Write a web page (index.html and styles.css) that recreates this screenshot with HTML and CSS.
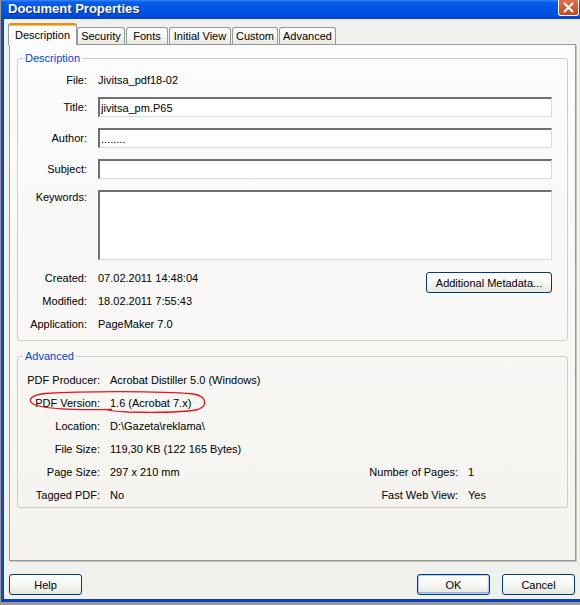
FILE: index.html
```html
<!DOCTYPE html>
<html lang="en">
<head>
    <meta charset="UTF-8">
    <title>Document Properties</title>
    <link rel="stylesheet" href="styles.css">
</head>
<body>
    <div class="window">
        <div class="titlebar">
            <span class="title">Document Properties</span>
            <span class="close">
                <svg width="13" height="11" viewBox="0 0 13 11"><path d="M2 1 L11 10 M11 1 L2 10" stroke="#fff" stroke-width="2.2" fill="none"/></svg>
            </span>
        </div>
        <div class="client">
            <div class="tabs">
                <div class="tab active">Description</div>
                <div class="tab t-security">Security</div>
                <div class="tab t-fonts">Fonts</div>
                <div class="tab t-view">Initial View</div>
                <div class="tab t-custom">Custom</div>
                <div class="tab t-adv">Advanced</div>
            </div>
            <div class="panel">
                <fieldset class="group">
                    <legend>Description</legend>
                    <div class="row row-file">
                        <span class="lbl">File:</span>
                        <span>Jivitsa_pdf18-02</span>
                    </div>
                    <div class="row">
                        <span class="lbl">Title:</span>
                        <input class="field" type="text" value="jivitsa_pm.P65">
                    </div>
                    <div class="row">
                        <span class="lbl">Author:</span>
                        <input class="field" type="text" value="........">
                    </div>
                    <div class="row">
                        <span class="lbl">Subject:</span>
                        <input class="field" type="text" value="">
                    </div>
                    <div class="row row-top">
                        <span class="lbl">Keywords:</span>
                        <textarea class="field area"></textarea>
                    </div>
                    <div class="meta">
                        <div class="meta-rows">
                            <span class="lbl">Created:</span><span>07.02.2011 14:48:04</span>
                            <span class="lbl">Modified:</span><span>18.02.2011 7:55:43</span>
                            <span class="lbl">Application:</span><span>PageMaker 7.0</span>
                        </div>
                        <button class="btn meta-btn">Additional Metadata...</button>
                    </div>
                </fieldset>

                <fieldset class="group adv">
                    <legend>Advanced</legend>
                    <div class="adv-grid">
                        <span class="lbl">PDF Producer:</span><span>Acrobat Distiller 5.0 (Windows)</span><span></span><span></span>
                        <span class="lbl">PDF Version:</span><span>1.6 (Acrobat 7.x)</span><span></span><span></span>
                        <span class="lbl">Location:</span><span>D:\Gazeta\reklama\</span><span></span><span></span>
                        <span class="lbl">File Size:</span><span>119,30 KB (122 165 Bytes)</span><span></span><span></span>
                        <span class="lbl">Page Size:</span><span>297 x 210 mm</span><span class="lbl">Number of Pages:</span><span>1</span>
                        <span class="lbl">Tagged PDF:</span><span>No</span><span class="lbl">Fast Web View:</span><span>Yes</span>
                    </div>
                </fieldset>
            </div>
            <div class="buttons">
                <button class="btn">Help</button>
                <div class="buttons-right">
                    <button class="btn default">OK</button>
                    <button class="btn">Cancel</button>
                </div>
            </div>
        </div>
    </div>

    <!-- red pen mark round the PDF version -->
    <svg class="pen" width="580" height="605" viewBox="0 0 580 605">
        <path d="M112 409.5 C85 410 45 410 33 404 C27 400 31 395 45 393.5 C85 391 160 391 193 394 C207 396 208 406 198 409.5 C182 413 150 412.5 128 412 C118 411.5 110 411 106 409.5" fill="none" stroke="#e8141c" stroke-width="1.3"/>
    </svg>
</body>
</html>
```

FILE: styles.css
```css
html, body {
    margin: 0;
}
body {
    position: relative;
    width: 580px;
    height: 605px;
    overflow: hidden;
    background: #9a9a9a;
    font-family: "Liberation Sans", Arial, sans-serif;
    font-size: 11px;
    color: #000;
}
.window {
    width: 579px;
    margin-left: 1px;
    border-left: 3px solid #0b47d6;
    border-bottom: 3px solid #0a3fc6;
}
.titlebar {
    display: flex;
    align-items: flex-start;
    height: 19px;
    margin-left: -3px;
    padding-left: 7px;
    background: linear-gradient(to bottom, #3d86f5 0, #0a5ee9 2px, #0057e6 40%, #0050de 75%, #0045cc 100%);
}
.title {
    color: #fff;
    font-weight: bold;
    font-size: 13px;
    line-height: 17px;
    text-shadow: 1px 1px 0 #0a2a8a;
}
.close {
    display: flex;
    justify-content: center;
    align-items: center;
    width: 19px;
    height: 15px;
    margin-left: auto;
    margin-right: 4px;
    border: 1px solid #fff;
    border-top: 0;
    border-radius: 0 0 3px 3px;
    background: linear-gradient(to bottom, #e4714a, #d9532c 60%, #c9431f);
}
.client {
    height: 580px;
    box-sizing: border-box;
    padding: 4px 0 0 4px;
    background: #f0f0ed;
}
.tabs {
    position: relative;
    z-index: 1;
    display: flex;
    align-items: flex-end;
    height: 22px;
    margin-bottom: -1px;
}
.tab {
    display: flex;
    justify-content: center;
    align-items: center;
    box-sizing: border-box;
    height: 17px;
    margin-right: 1px;
    margin-bottom: 1px;
    border: 1px solid #919b9c;
    border-bottom: 0;
    border-radius: 3px 3px 0 0;
    background: linear-gradient(to bottom, #fefefe, #f4f4f1 60%, #e9e8e1);
}
.tab.active {
    width: 69px;
    height: 22px;
    margin-right: 0;
    margin-bottom: 0;
    padding-bottom: 1px;
    border-top: 2px solid #e68b2c;
    box-shadow: inset 0 1px 0 #ffc73c;
    background: #fcfcfe;
}
.t-security { width: 48px; }
.t-fonts { width: 42px; }
.t-view { width: 62px; }
.t-custom { width: 46px; }
.t-adv { width: 57px; }
.panel {
    box-sizing: border-box;
    width: 567px;
    height: 517px;
    margin-left: 1px;
    padding: 7px 7px 0;
    border: 1px solid #919b9c;
    background: linear-gradient(to bottom, #fcfcfe, #f4f3ee);
    box-shadow: 1px 1px 0 #c9c8be;
}
.group {
    margin: 0;
    padding: 5px 15px 6px 0;
    min-width: 0;
    border: 1px solid #d0d0bf;
    border-radius: 3px;
}
.group legend {
    margin-left: 5px;
    padding: 0 2px;
    line-height: 13px;
    color: #0046d5;
}
.lbl {
    text-align: right;
}
.row {
    display: flex;
    align-items: center;
    height: 20px;
    margin-bottom: 11px;
}
.row .lbl {
    flex: 0 0 69px;
    margin-right: 11px;
}
.row-file {
    margin-bottom: 7px;
}
.row-top {
    align-items: flex-start;
    height: 70px;
    margin-bottom: 8px;
}
.row-top .lbl {
    padding-top: 1px;
    line-height: 13px;
}
.field {
    flex: 1;
    box-sizing: border-box;
    height: 20px;
    margin: 0;
    padding: 0 1px;
    border-style: solid;
    border-width: 2px 1px 1px 2px;
    border-color: #707070 #dcdcd6 #dcdcd6 #707070;
    background: #fff;
    font: inherit;
    color: #000;
    outline: none;
}
.area {
    height: 70px;
    resize: none;
}
.meta {
    display: flex;
    align-items: flex-start;
}
.meta-rows {
    display: grid;
    grid-template-columns: 69px auto;
    grid-auto-rows: 20px;
    column-gap: 11px;
    row-gap: 3px;
    align-items: center;
}
.btn {
    box-sizing: border-box;
    width: 73px;
    height: 21px;
    margin: 0;
    padding: 0;
    border: 1px solid #003c74;
    border-radius: 3px;
    background: linear-gradient(to bottom, #ffffff, #f6f6f3 55%, #e6e5de);
    font: inherit;
    color: #000;
}
.meta-btn {
    width: 126px;
    margin-top: 4px;
    margin-left: auto;
}
.adv {
    margin-top: 9px;
    padding: 5px 0 1px 0;
}
.adv-grid {
    display: grid;
    grid-template-columns: 82px 238px 100px 1fr;
    grid-auto-rows: 23px;
    column-gap: 10px;
    align-items: center;
}
.buttons {
    display: flex;
    justify-content: space-between;
    width: 566px;
    margin: 13px 0 0 1px;
}
.buttons-right {
    display: flex;
    gap: 12px;
}
.btn.default {
    box-shadow: inset 0 0 0 1px #b5cff3, inset 0 -1px 0 1px #91b2e6;
}
.pen {
    position: absolute;
    left: 0;
    top: 0;
    pointer-events: none;
}
```
